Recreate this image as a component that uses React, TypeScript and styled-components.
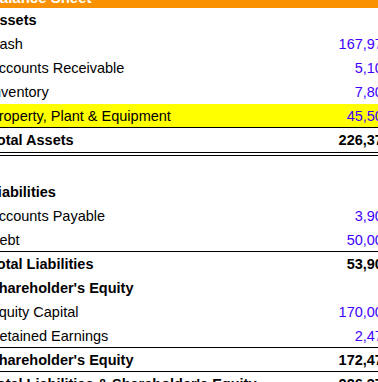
import React from 'react';
import styled, { createGlobalStyle } from 'styled-components';

const GlobalStyle = createGlobalStyle`
  html, body { margin: 0; padding: 0; background: #ffffff; }
  body { font-family: "Liberation Sans", Arial, sans-serif; }
`;

const Viewport = styled.div`
  width: 378px;
  height: 382px;
  overflow: hidden;
  background: #ffffff;
`;

const Sheet = styled.div`
  width: 402px;
  margin: -18px 0 0 -11px;
  display: flex;
  flex-direction: column;
`;

const Title = styled.div`
  height: 26px;
  box-sizing: border-box;
  padding-top: 6px;
  background: #f99100;
  color: #ffffff;
  font-weight: bold;
  font-size: 15px;
  line-height: 20px;
`;

type Rule = 'none' | 'single' | 'double';

const Row = styled.div<{ $rule: Rule; $highlight?: boolean }>`
  display: grid;
  grid-template-columns: 1fr auto;
  align-items: start;
  box-sizing: border-box;
  height: ${(p) => (p.$rule === 'double' ? 28 : 24)}px;
  background: ${(p) => (p.$highlight ? '#ffff00' : 'transparent')};
  border-bottom: ${(p) =>
    p.$rule === 'double' ? '4px double #000' : p.$rule === 'single' ? '1px solid #000' : 'none'};
  font-size: 14.5px;
  line-height: 24px;
  white-space: nowrap;
`;

const Label = styled.span<{ $bold?: boolean }>`
  color: #000;
  font-weight: ${(p) => (p.$bold ? 'bold' : 'normal')};
`;

const Amount = styled.span<{ $bold?: boolean }>`
  text-align: right;
  color: ${(p) => (p.$bold ? '#000' : '#4000ff')};
  font-weight: ${(p) => (p.$bold ? 'bold' : 'normal')};
`;

type Line = {
  label?: string;
  amount?: string;
  bold?: boolean;
  rule?: Rule;
  highlight?: boolean;
};

const lines: Line[] = [
  { label: 'Assets', bold: true },
  { label: 'Cash', amount: '167,975' },
  { label: 'Accounts Receivable', amount: '5,100' },
  { label: 'Inventory', amount: '7,800' },
  { label: 'Property, Plant & Equipment', amount: '45,500', highlight: true, rule: 'single' },
  { label: 'Total Assets', amount: '226,375', bold: true, rule: 'double' },
  {},
  { label: 'Liabilities', bold: true },
  { label: 'Accounts Payable', amount: '3,900' },
  { label: 'Debt', amount: '50,000', rule: 'single' },
  { label: 'Total Liabilities', amount: '53,900', bold: true },
  { label: "Shareholder's Equity", bold: true },
  { label: 'Equity Capital', amount: '170,000' },
  { label: 'Retained Earnings', amount: '2,475', rule: 'single' },
  { label: "Shareholder's Equity", amount: '172,475', bold: true, rule: 'single' },
  { label: "Total Liabilities & Shareholder's Equity", amount: '226,375', bold: true, rule: 'double' },
];

export default function App() {
  return (
    <>
      <GlobalStyle />
      <Viewport>
        <Sheet>
          <Title>Balance Sheet</Title>
          {lines.map((l, i) => (
            <Row key={i} $rule={l.rule ?? 'none'} $highlight={l.highlight}>
              <Label $bold={l.bold}>{l.label ?? '\u00a0'}</Label>
              <Amount $bold={l.bold}>{l.amount ?? ''}</Amount>
            </Row>
          ))}
        </Sheet>
      </Viewport>
    </>
  );
}
